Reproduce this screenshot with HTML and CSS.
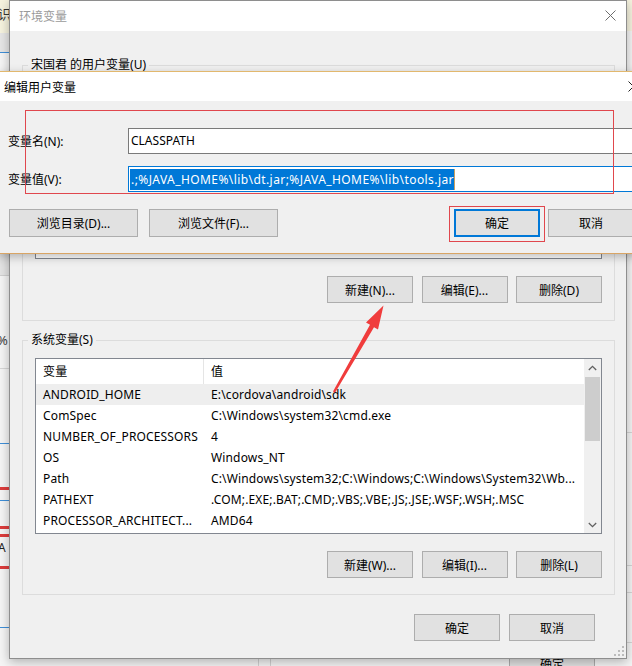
FILE: index.html
```html
<!DOCTYPE html>
<html lang="zh-CN">
<head>
<meta charset="utf-8">
<title>环境变量</title>
<link rel="stylesheet" href="styles.css">
</head>
<body>
<div class="desktop">
  <div class="backdrop">
    <div class="bd bd-cream-l"><span class="bd-char">识</span></div>
    <div class="bd bd-cream-r"></div>
    <div class="bd bd-gray-l1"></div>
    <div class="bd bd-blue bd-l" style="top:52px"></div>
    <div class="bd bd-gray-l2"></div>
    <span class="bd bd-pct">%</span>
    <div class="bd bd-line bd-l" style="top:368px"></div>
    <div class="bd bd-blue bd-l" style="top:443px"></div>
    <div class="bd bd-red bd-l" style="top:487px"></div>
    <div class="bd bd-blue bd-l" style="top:500px"></div>
    <div class="bd bd-red bd-l" style="top:526px"></div>
    <div class="bd bd-red bd-l" style="top:534px"></div>
    <span class="bd bd-a">A</span>
    <div class="bd bd-red bd-l" style="top:566px"></div>
    <div class="bd bd-blue bd-l" style="top:627px"></div>
    <div class="bd bd-line bd-r" style="top:432px"></div>
    <div class="bd bd-line bd-r" style="top:565px"></div>
    <div class="bd bd-line bd-r" style="top:592px"></div>
    <div class="bd bd-line bd-r" style="top:642px"></div>
    <div class="bd bd-vline" style="left:258px"></div>
    <div class="bd bd-vline" style="left:270px"></div>
    <div class="bd bd-btn">确定</div>
  </div>

  <section class="env-dialog">
    <header class="env-title">
      <span>环境变量</span>
      <svg class="close" width="11" height="11" viewBox="0 0 11 11"><path d="M0.5 0.5 L10.5 10.5 M10.5 0.5 L0.5 10.5" stroke="#6d6d6d" stroke-width="1" fill="none"/></svg>
    </header>
    <div class="env-body">
      <fieldset class="group">
        <legend>宋国君 的用户变量(U)</legend>
        <div class="listbox user-list"></div>
        <div class="btn-row">
          <button class="btn">新建(N)...</button>
          <button class="btn">编辑(E)...</button>
          <button class="btn">删除(D)</button>
        </div>
      </fieldset>
      <fieldset class="group sys-group">
        <legend>系统变量(S)</legend>
        <div class="listbox sys-list">
          <div class="list-main">
            <div class="row head"><span class="c1">变量</span><span class="c2">值</span></div>
            <div class="row hover"><span class="c1">ANDROID_HOME</span><span class="c2">E:\cordova\android\sdk</span></div>
            <div class="row"><span class="c1">ComSpec</span><span class="c2">C:\Windows\system32\cmd.exe</span></div>
            <div class="row"><span class="c1">NUMBER_OF_PROCESSORS</span><span class="c2">4</span></div>
            <div class="row"><span class="c1">OS</span><span class="c2">Windows_NT</span></div>
            <div class="row"><span class="c1">Path</span><span class="c2">C:\Windows\system32;C:\Windows;C:\Windows\System32\Wb...</span></div>
            <div class="row"><span class="c1">PATHEXT</span><span class="c2">.COM;.EXE;.BAT;.CMD;.VBS;.VBE;.JS;.JSE;.WSF;.WSH;.MSC</span></div>
            <div class="row"><span class="c1">PROCESSOR_ARCHITECT...</span><span class="c2">AMD64</span></div>
          </div>
          <div class="scrollbar">
            <div class="sb-arrow"><svg width="9" height="6" viewBox="0 0 9 6"><path d="M0.8 5 L4.5 1.3 L8.2 5" stroke="#606060" stroke-width="1.3" fill="none"/></svg></div>
            <div class="sb-thumb"></div>
            <div class="sb-track"></div>
            <div class="sb-arrow"><svg width="9" height="6" viewBox="0 0 9 6"><path d="M0.8 1 L4.5 4.7 L8.2 1" stroke="#606060" stroke-width="1.3" fill="none"/></svg></div>
          </div>
        </div>
        <div class="btn-row">
          <button class="btn">新建(W)...</button>
          <button class="btn">编辑(I)...</button>
          <button class="btn">删除(L)</button>
        </div>
      </fieldset>
      <div class="dlg-btns">
        <button class="btn">确定</button>
        <button class="btn">取消</button>
      </div>
    </div>
    <svg class="grip" width="10" height="10" viewBox="0 0 10 10">
      <rect x="8" y="0" width="2" height="2" fill="#bcbcbc"/>
      <rect x="4" y="4" width="2" height="2" fill="#bcbcbc"/>
      <rect x="8" y="4" width="2" height="2" fill="#bcbcbc"/>
      <rect x="0" y="8" width="2" height="2" fill="#bcbcbc"/>
      <rect x="4" y="8" width="2" height="2" fill="#bcbcbc"/>
      <rect x="8" y="8" width="2" height="2" fill="#bcbcbc"/>
    </svg>
  </section>

  <section class="edit-dialog">
    <header class="edit-title">
      <span>编辑用户变量</span>
      <svg class="close" width="11" height="11" viewBox="0 0 11 11"><path d="M0.5 0.5 L10.5 10.5 M10.5 0.5 L0.5 10.5" stroke="#222" stroke-width="1" fill="none"/></svg>
    </header>
    <div class="edit-body">
      <div class="field">
        <label class="field-label">变量名(N):</label>
        <div class="textbox">CLASSPATH</div>
      </div>
      <div class="field field-2">
        <label class="field-label">变量值(V):</label>
        <div class="textbox focused"><span class="sel">.;%JAVA_HOME%\lib\dt.jar;%JAVA_HOME%\lib\tools.jar</span><span class="caret"></span></div>
      </div>
      <div class="edit-btns">
        <button class="btn wide">浏览目录(D)...</button>
        <button class="btn wide">浏览文件(F)...</button>
        <button class="btn default">确定</button>
        <button class="btn">取消</button>
      </div>
    </div>
  </section>

  <div class="anno anno-fields"></div>
  <div class="anno anno-ok"></div>
  <svg class="arrow" width="60" height="96" viewBox="0 0 60 96">
    <polygon points="3,91.5 40,24.8 36,22.5 53.5,5.5 48,29.5 44,27.2 5,92.8" fill="#f03c3c"/>
  </svg>
</div>
</body>
</html>
```

FILE: styles.css
```css
* { box-sizing: border-box; }
html, body { margin: 0; padding: 0; }
body {
  width: 632px;
  height: 666px;
  overflow: hidden;
  background: #f5f5f5;
  font-family: "Noto Sans", "Noto Sans CJK SC", sans-serif;
  font-size: 12px;
  color: #000;
}
.desktop { position: relative; width: 632px; height: 666px; overflow: hidden; }

/* background window fragments */
.backdrop { position: absolute; inset: 0; }
.bd { position: absolute; }
.bd-cream-l { left: 0; top: 0; width: 10px; height: 33px; background: #f6f3df; overflow: hidden; }
.bd-char { position: absolute; left: -2px; top: 6px; font-size: 13px; line-height: 16px; color: #333; }
.bd-cream-r { left: 626px; top: 0; width: 6px; height: 31px; background: #f6f3df; }
.bd-gray-l1 { left: 0; top: 33px; width: 10px; height: 19px; background: #e6e6e6; }
.bd-gray-l2 { left: 0; top: 254px; width: 10px; height: 22px; background: #e4e4e4; border-bottom: 1px solid #d0d0d0; }
.bd-pct { left: -3px; top: 332px; font-size: 13px; line-height: 16px; color: #444; }
.bd-a { left: -2px; top: 541px; font-size: 12px; line-height: 14px; color: #222; }
.bd-l { left: 0; width: 10px; }
.bd-r { left: 627px; width: 5px; }
.bd-line { height: 1px; background: #d6d6d6; }
.bd-blue { height: 1px; background: #3f8fd8; }
.bd-red { height: 3px; background: #dd3d3d; }
.bd-vline { top: 656px; width: 1px; height: 10px; background: #d2d2d2; }
.bd-btn {
  left: 509px; top: 651px; width: 86px; height: 28px;
  border: 1px solid #adadad; background: #e1e1e1;
  text-align: center; line-height: 26px; font-size: 12px;
}

/* environment variables window */
.env-dialog {
  position: absolute;
  left: 9px;
  top: 0;
  width: 618px;
  height: 659px;
  border: 1px solid #8e8e8e;
  background: #f0f0f0;
  box-shadow: 0 3px 10px rgba(0, 0, 0, 0.28);
  display: flex;
  flex-direction: column;
}
.env-title {
  height: 30px;
  flex: none;
  background: #fff;
  color: #9a9a9a;
  display: flex;
  align-items: center;
  justify-content: space-between;
  padding: 0 10px 1px 9px;
}
.env-body { padding: 26px 11px 0 12px; }

.group {
  margin: 0;
  padding: 0 12px 17px;
  border: 1px solid #dcdcdc;
  min-width: 0;
}
.group legend {
  padding: 0 3px;
  margin-left: -7px;
  line-height: 16px;
}
.sys-group { margin-top: 11px; padding-bottom: 16px; }

.listbox {
  margin-top: 10px;
  height: 176px;
  border: 1px solid #828790;
  background: #fff;
}
.sys-list { display: flex; }
.list-main { flex: 1; min-width: 0; }
.row {
  display: grid;
  grid-template-columns: 168px 1fr;
  height: 21px;
  line-height: 21px;
  white-space: nowrap;
  letter-spacing: 0.15px;
}
.row .c1, .row .c2 { padding-left: 7px; overflow: hidden; }
.row.head { height: 25px; line-height: 25px; }
.row.head .c1 { border-right: 1px solid #e5e5e5; }
.row.hover { background: #eeeeee; }

.scrollbar {
  width: 17px;
  flex: none;
  background: #f0f0f0;
  display: flex;
  flex-direction: column;
}
.sb-arrow { height: 17px; display: flex; align-items: center; justify-content: center; }
.sb-thumb { height: 64px; margin: 1px 1px 0; background: #cdcdcd; }
.sb-track { flex: 1; }

.btn-row {
  display: flex;
  justify-content: flex-end;
  gap: 8.5px;
  margin-top: 17px;
}
.btn {
  width: 86px;
  height: 27px;
  margin: 0;
  padding: 0;
  border: 1px solid #adadad;
  background: #e1e1e1;
  font: inherit;
  color: #000;
}
.dlg-btns {
  display: flex;
  justify-content: flex-end;
  gap: 9px;
  margin-top: 19px;
  padding-right: 20px;
}
.grip { position: absolute; right: 2px; bottom: 2px; }

/* edit user variable window */
.edit-dialog {
  position: absolute;
  left: -2px;
  top: 71px;
  width: 642px;
  height: 183px;
  border-top: 1px solid #e2b86e;
  border-bottom: 1px solid #d9a565;
  background: #f0f0f0;
  box-shadow: 0 3px 9px rgba(0, 0, 0, 0.25);
}
.edit-title {
  height: 29px;
  background: #fff;
  display: flex;
  align-items: center;
  justify-content: space-between;
  padding: 0 1px 0 6px;
}
.edit-body { padding: 27px 6px 0 10px; }
.field { display: flex; align-items: center; height: 26px; }
.field-2 { margin-top: 12px; }
.field-label { width: 120px; flex: none; }
.textbox {
  flex: 1;
  height: 26px;
  border: 1px solid #7a7a7a;
  background: #fff;
  padding: 0 0 0 2px;
  line-height: 24px;
  white-space: nowrap;
  overflow: hidden;
  display: flex;
  align-items: center;
}
.textbox.focused { border-color: #0078d7; padding-left: 1px; }
.sel {
  background: #0078d7;
  color: #fff;
  line-height: 21px;
  padding-left: 1px;
  letter-spacing: 0.42px;
}
.caret { width: 1px; height: 21px; background: #c8a060; }

.edit-btns { display: flex; gap: 8px; margin-top: 17px; }
.edit-btns .btn { height: 28px; }
.edit-btns .wide { width: 129px; margin-left: 1px; }
.edit-btns .wide + .wide { margin-left: 3px; }
.edit-btns .default { margin-left: auto; border: 2px solid #0078d7; }

/* annotations */
.anno { position: absolute; border: 1px solid #e0474d; }
.anno-fields { left: 25px; top: 110px; width: 589px; height: 84px; }
.anno-ok { left: 449px; top: 206px; width: 96px; height: 36px; }
.arrow { position: absolute; left: 330px; top: 300px; }
```
